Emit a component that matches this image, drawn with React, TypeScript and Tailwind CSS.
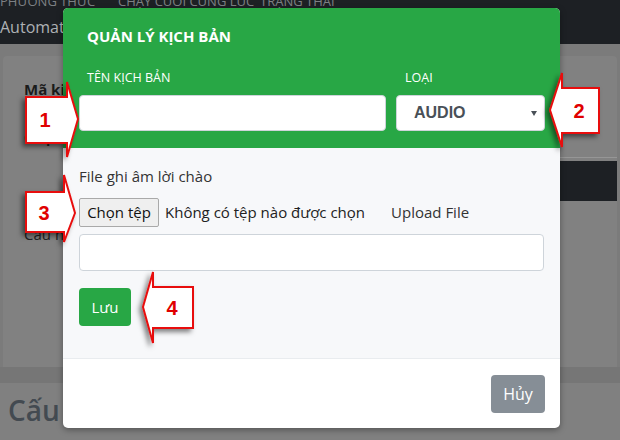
import React from "react";

const CALLOUTS = [
  { n: "1", pts: "26,97 67,97 67,82 78,119 67,157 67,143 26,143", x: 45, y: 120 },
  { n: "2", pts: "550,110 562,73 562,88 599,88 599,133 562,133 562,147", x: 579, y: 111 },
  { n: "3", pts: "26,192 64,192 64,175 75,213 64,242 64,232 26,232", x: 44, y: 213 },
  { n: "4", pts: "143,307 153,272 153,287 193,287 193,328 153,328 153,343", x: 172, y: 308 },
];

export default function App() {
  return (
    <div className="relative h-[440px] w-[620px] overflow-hidden bg-[#808080] font-['Open_Sans',sans-serif]">

      {/* ── Page behind the dialog (dimmed) ── */}
      <div className="h-[50px] bg-[#1d2024]">
        <div className="-mt-[6px] flex h-[14px] text-[13px] leading-[14px] text-[#7d8084]">
          <span className="w-[118px]">PHƯƠNG THỨC</span>
          <span className="w-[142px]">CHẠY CUỐI CÙNG LÚC</span>
          <span>TRẠNG THÁI</span>
        </div>
        <p className="mt-[9px] text-[16px] leading-[20px] text-[#aeb1b4]">Automation Campaign</p>
      </div>

      <div className="bg-[#7b7b7b] px-[3px] pt-[12px]">
        <div className="h-[311px] rounded-t-[4px] bg-[#818181] pl-[21px]">
          <p className="pt-[23px] text-[15px] font-bold leading-[20px] text-[#1b1b1b]">Mã kịch bản</p>
          <p className="mt-[28px] text-[15px] font-bold leading-[20px] text-[#1b1b1b]">Chọn kịch bản</p>
          <div className="ml-[40px] mt-[10px] h-px bg-[#969696]" />
          <div className="ml-[40px] mt-[3px] h-[40px] bg-[#1d2024]" />
          <p className="mt-[23px] text-[15px] leading-[20px] text-[#222]">Câu hỏi kịch bản</p>
        </div>
      </div>
      <div className="h-[16px] bg-[#767676]" />
      <p className="ml-[8px] mt-[10px] text-[28px] font-semibold leading-[34px] text-[#434a51]">Cấu hình kịch bản</p>

      {/* ── Dialog ── */}
      <div className="absolute left-[63px] top-[8px] flex h-[420px] w-[497px] flex-col overflow-hidden rounded-[5px] bg-white shadow-[0_2px_6px_rgba(0,0,0,0.35)]">
        {/* Header */}
        <div className="h-[140px] bg-[#28a745] px-4 pt-[18px]">
          <h2 className="pl-2 text-[15px] font-bold leading-[20px] text-white">QUẢN LÝ KỊCH BẢN</h2>
          <div className="mt-[24px] grid grid-cols-[307px_149px] gap-x-[10px]">
            <div>
              <p className="pl-2 text-[12.5px] leading-[16px] text-white">TÊN KỊCH BẢN</p>
              <div className="mt-[9px] h-[36px] rounded-[4px] border border-[#ced4da] bg-white" />
            </div>
            <div>
              <p className="pl-[9px] text-[12.5px] leading-[16px] text-white">LOẠI</p>
              <div className="mt-[9px] flex h-[36px] items-center justify-between rounded-[4px] border border-[#ced4da] bg-white pl-[17px] pr-[7px]">
                <span className="font-['Liberation_Sans',sans-serif] text-[16px] font-bold text-[#495057]">AUDIO</span>
                <svg width="6" height="5" viewBox="0 0 6 5">
                  <polygon points="0,0 6,0 3,5" fill="#495057" />
                </svg>
              </div>
            </div>
          </div>
        </div>

        {/* Body */}
        <div className="h-[210px] bg-[#f7f8fa] px-4 pt-[18px]">
          <p className="text-[15px] leading-[20px] text-[#333]">File ghi âm lời chào</p>
          <div className="mt-[12px] flex h-[29px] items-center text-[15px]">
            <button className="h-[29px] w-[80px] rounded-[2px] border border-[#a9a9a9] bg-[#efefef] text-[#111]">Chọn tệp</button>
            <span className="ml-[6px] text-[#222]">Không có tệp nào được chọn</span>
            <span className="ml-[26px] text-[#333]">Upload File</span>
          </div>
          <div className="mt-[7px] h-[37px] rounded-[4px] border border-[#ced4da] bg-white" />
          <button className="mt-[17px] h-[38px] w-[52px] rounded-[4px] bg-[#28a745] text-[15px] text-white">Lưu</button>
        </div>

        {/* Footer */}
        <div className="flex flex-1 justify-end border-t border-[#e9ecef] pr-[15px] pt-[16px]">
          <button className="h-[38px] w-[54px] rounded-[4px] bg-[#868e96] text-[16px] text-white">Hủy</button>
        </div>
      </div>

      {/* ── Numbered callouts ── */}
      <svg className="pointer-events-none absolute left-0 top-0" width="620" height="440" viewBox="0 0 620 440">
        <defs>
          <filter id="sh" x="-50%" y="-50%" width="200%" height="200%">
            <feDropShadow dx="-3" dy="3" stdDeviation="2.5" floodColor="#000" floodOpacity="0.5" />
          </filter>
        </defs>
        {CALLOUTS.map(c => (
          <g key={c.n}>
            <polygon points={c.pts} fill="#fff" stroke="#e81010" strokeWidth="2" strokeLinejoin="miter" filter="url(#sh)" />
            <text x={c.x} y={c.y} textAnchor="middle" dominantBaseline="central" fill="#e00000" fontFamily="Liberation Sans, Arial, sans-serif" fontWeight="bold" fontSize="20">
              {c.n}
            </text>
          </g>
        ))}
      </svg>
    </div>
  );
}
